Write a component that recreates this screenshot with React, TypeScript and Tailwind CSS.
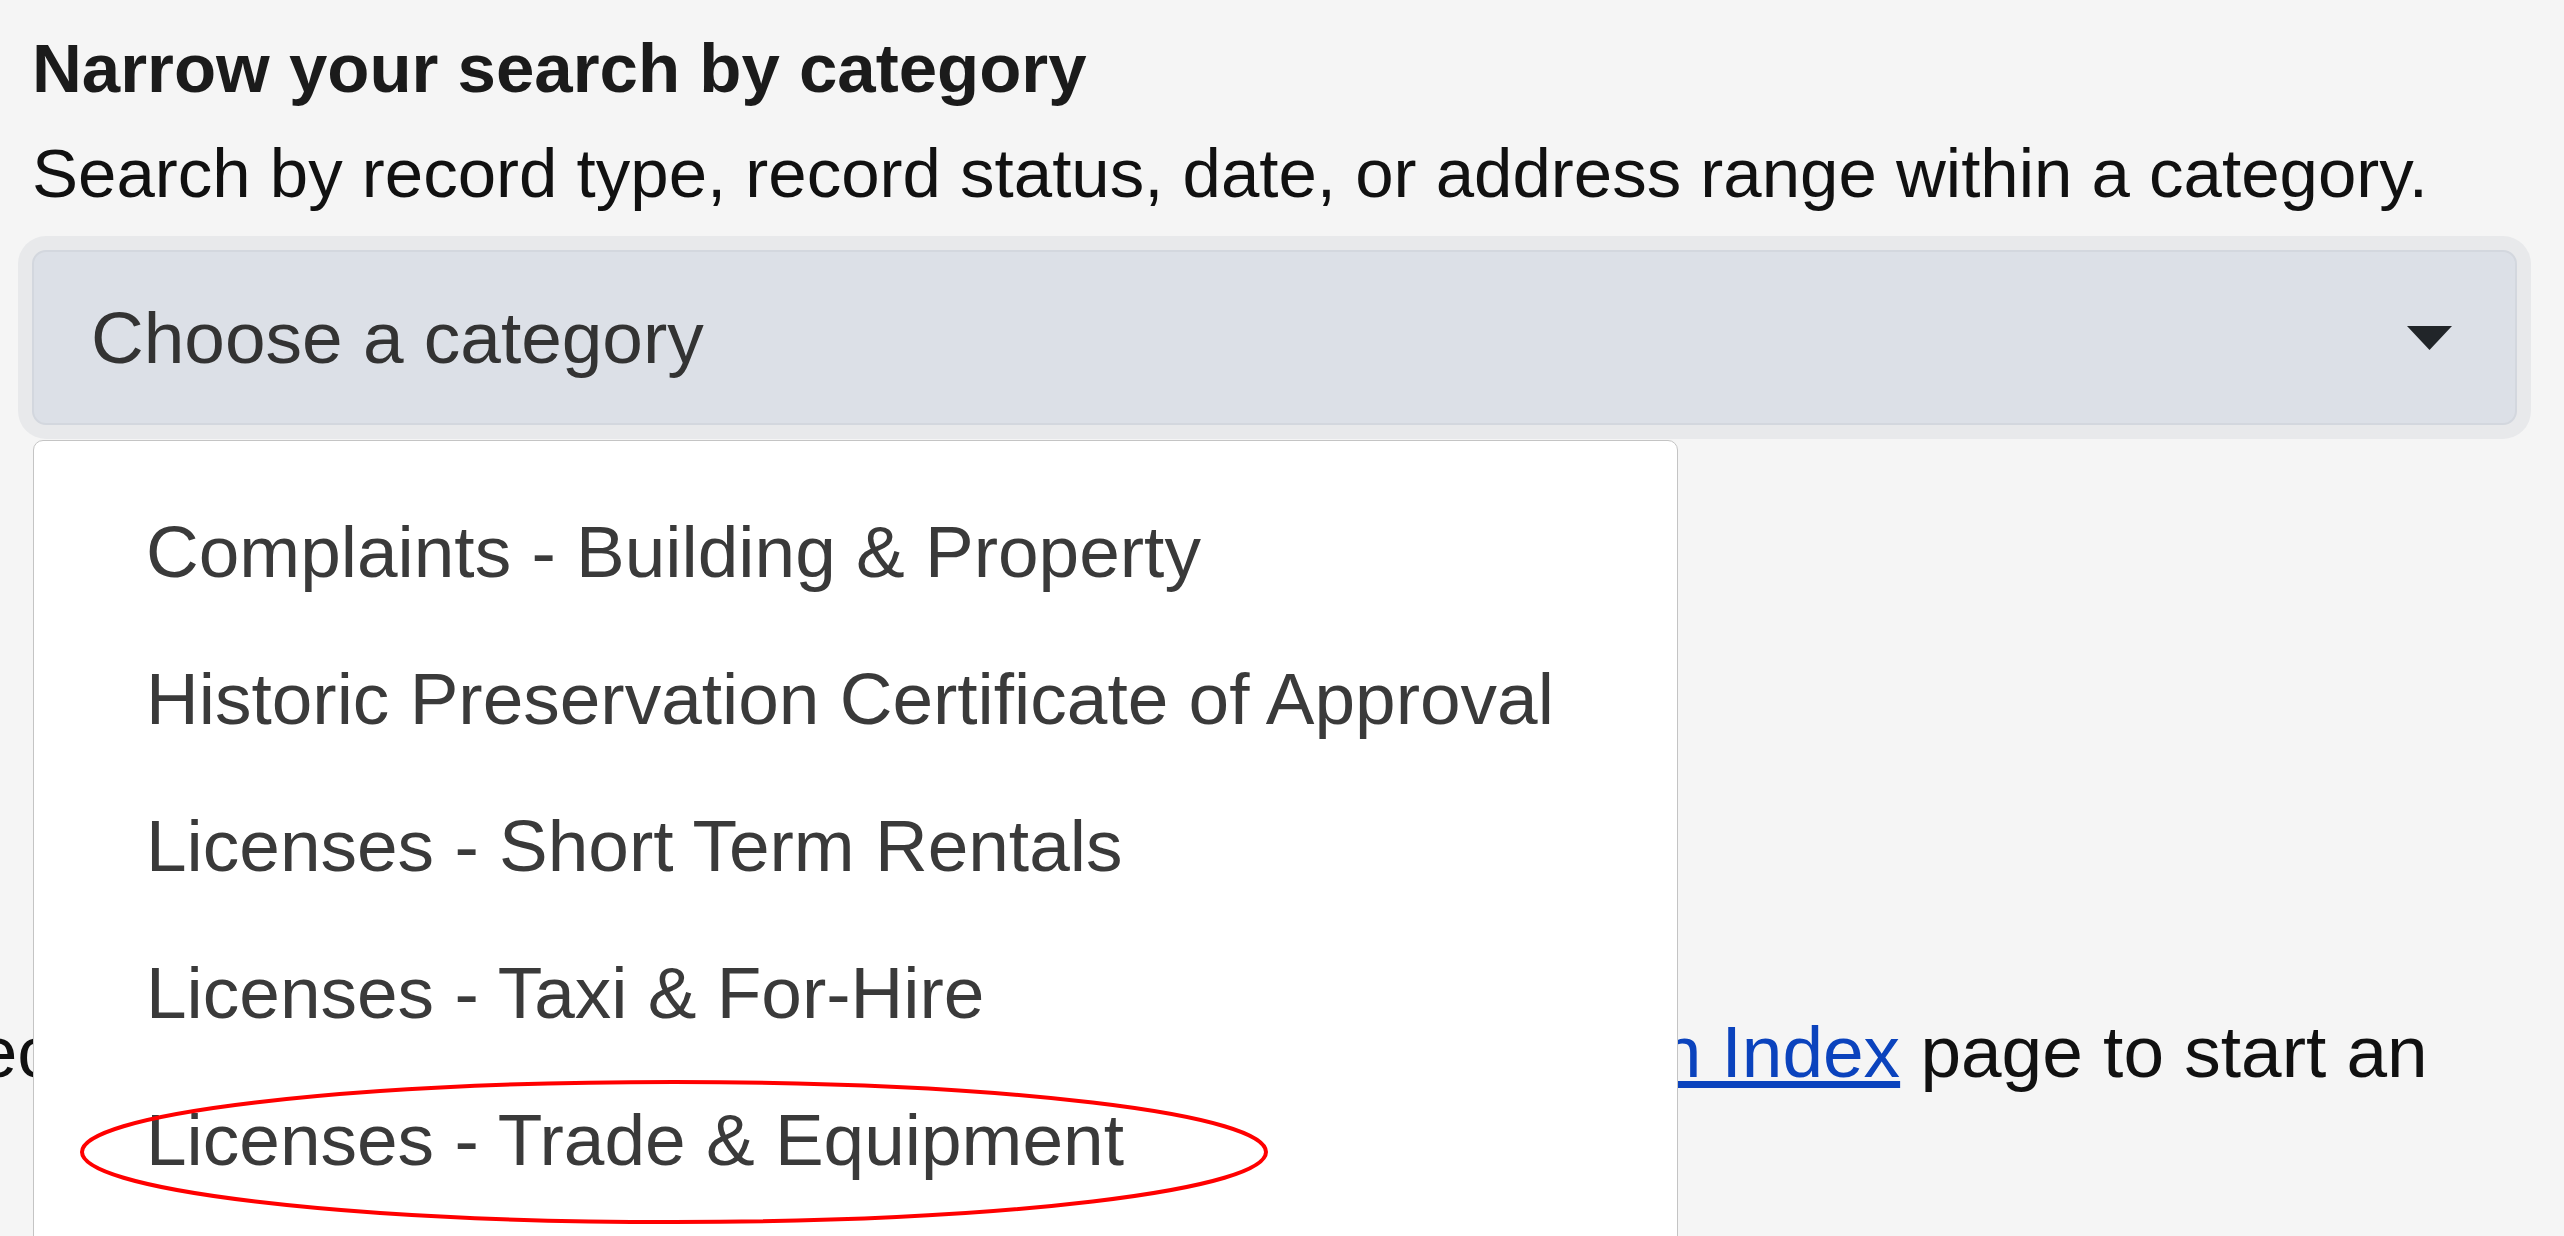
const categories = [
  "Complaints - Building & Property",
  "Historic Preservation Certificate of Approval",
  "Licenses - Short Term Rentals",
  "Licenses - Taxi & For-Hire",
  "Licenses - Trade & Equipment",
  "Permits - Building & Construction",
];

export default function App() {
  return (
    <div className="relative h-[1236px] w-full overflow-hidden bg-[#f5f5f5] font-['Liberation_Sans',Arial,sans-serif]">
      <div className="pl-[32px] pr-[47px] pt-[27px]">
        <h2 className="text-[69px] font-bold leading-[83px] text-[#1b1b1b]">
          Narrow your search by category
        </h2>
        <p className="mt-[22px] text-[69px] leading-[83px] text-[#111]">
          Search by record type, record status, date, or address range within a category.
        </p>

        <div className="relative mt-[35px]">
          <div className="flex h-[175px] items-center justify-between rounded-[14px] border-2 border-[#d3d7de] bg-[#dce0e7] pl-[57px] pr-[63px] shadow-[0_0_0_14px_#e8e9eb]">
            <span className="text-[73px] text-[#333]">Choose a category</span>
            <svg width="45" height="24" viewBox="0 0 45 24">
              <polygon points="0,0 45,0 22.5,24" fill="#212529" />
            </svg>
          </div>

          <ul className="absolute left-[1px] top-[calc(100%+15px)] z-10 w-[1645px] rounded-t-[10px] border border-[#c4c4c4] bg-white pt-[37px]">
            {categories.map((c) => (
              <li key={c} className="py-[32px] pl-[112px] text-[73px] leading-[83px] text-[#3a3a3a]">
                {c}
              </li>
            ))}
          </ul>
        </div>

        <p className="-ml-[108px] mt-[585px] whitespace-nowrap text-[73px] leading-[83px] text-[#111]">
          Records not displayed? Please view the{" "}
          <a href="#" className="text-[#0b43bd] underline">
            Permit Search Index
          </a>{" "}
          page to start an
        </p>
      </div>

      <svg className="pointer-events-none absolute left-0 top-0 z-20" width="2564" height="1236">
        <ellipse cx="674" cy="1152" rx="592" ry="70" fill="none" stroke="#ff0000" strokeWidth="4" />
      </svg>
    </div>
  );
}
